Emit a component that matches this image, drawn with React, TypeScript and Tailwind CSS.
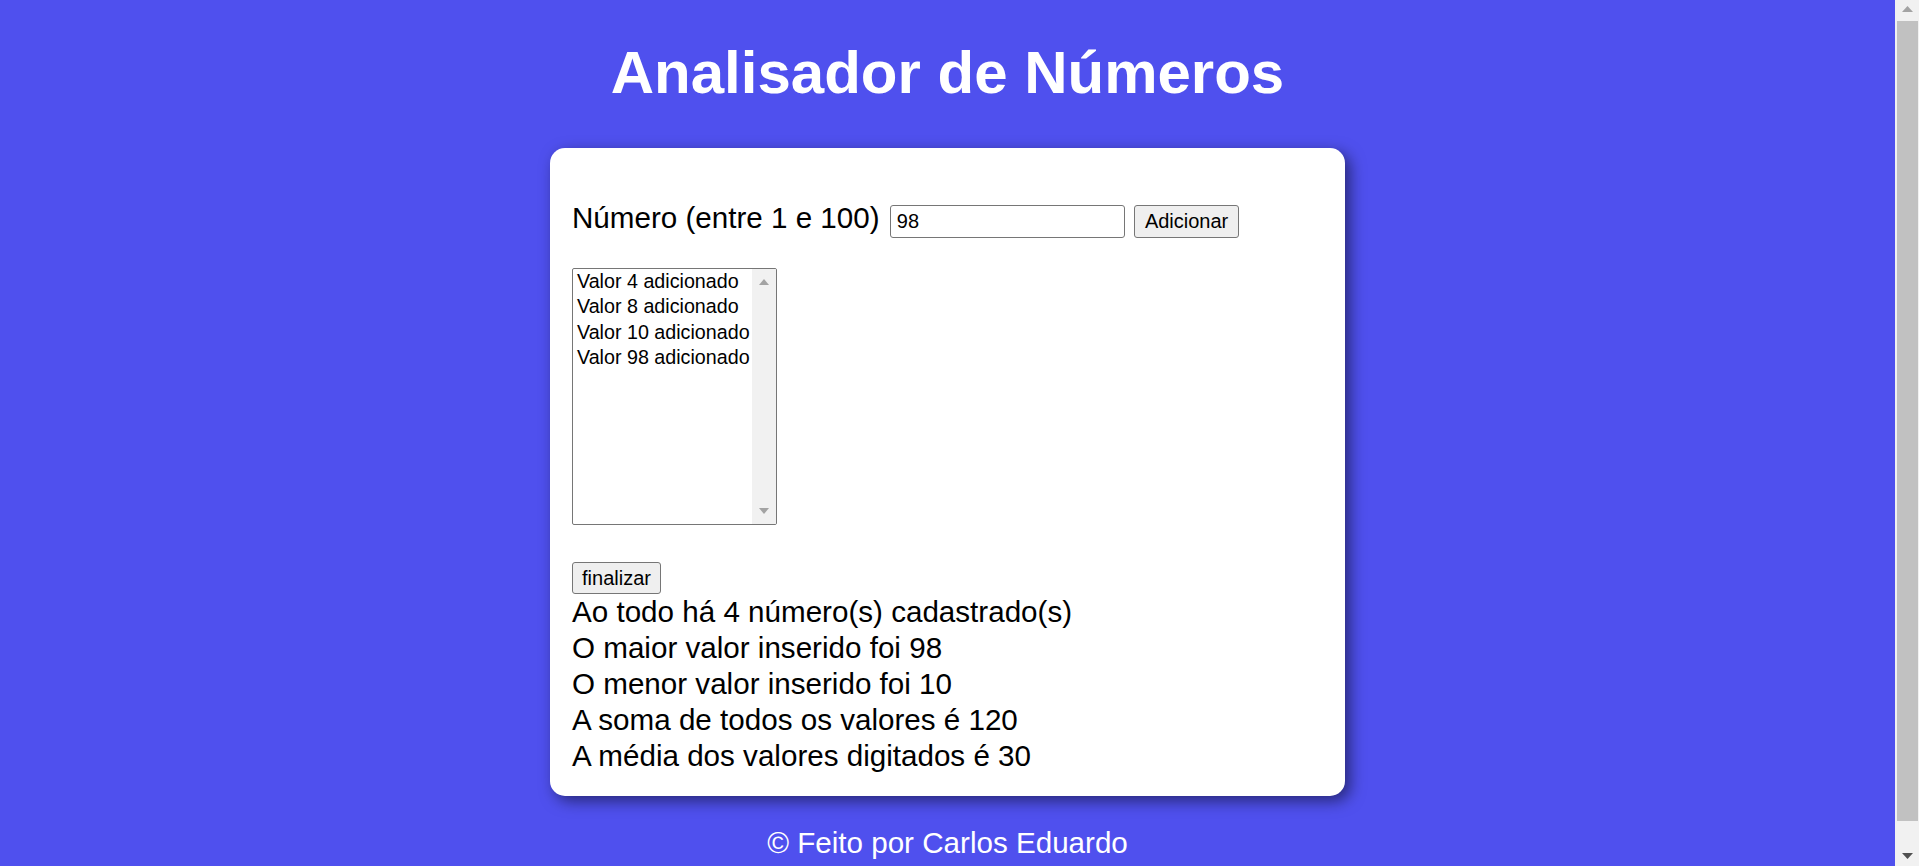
import React from 'react';

const valores = [4, 8, 10, 98];

// Caixa de lista desenhada a mao (imita o select multiple nativo)
const ListaValores = ({ itens }: { itens: number[] }) => (
    <div className="mt-[30px] flex h-[257px] w-[205px] overflow-hidden rounded-[2px] border border-[#767676] bg-white text-[19.7px] leading-[25.3px]">
        <div className="flex-1 pl-[4px]">
            {itens.map((v) => (
                <div key={v} className="whitespace-nowrap">Valor {v} adicionado</div>
            ))}
        </div>
        <div className="flex w-[24px] flex-col justify-between bg-[#f1f1f1]">
            <div className="flex h-[26px] items-center justify-center">
                <svg width="10" height="6" viewBox="0 0 10 6"><path d="M0 6 L5 0 L10 6 Z" fill="#a3a3a3" /></svg>
            </div>
            <div className="flex h-[26px] items-center justify-center">
                <svg width="10" height="6" viewBox="0 0 10 6"><path d="M0 0 L10 0 L5 6 Z" fill="#a3a3a3" /></svg>
            </div>
        </div>
    </div>
);

// Barra de rolagem da janela, como aparece na captura
const BarraRolagem = () => (
    <aside className="sticky top-0 flex h-screen w-[24px] shrink-0 flex-col self-start bg-[#f1f1f1]">
        <div className="flex h-[17px] items-center justify-center">
            <svg width="11" height="6" viewBox="0 0 11 6"><path d="M0 6 L5.5 0 L11 6 Z" fill="#a3a3a3" /></svg>
        </div>
        <div className="ml-[2px] mt-[4px] h-[800px] w-[21px] bg-[#c1c1c1]" />
        <div className="flex-1" />
        <div className="flex h-[21px] items-center justify-center">
            <svg width="11" height="6" viewBox="0 0 11 6"><path d="M0 0 L11 0 L5.5 6 Z" fill="#505050" /></svg>
        </div>
    </aside>
);

export default function App() {
    const total = valores.length;
    const maior = Math.max(...valores);
    const menor = 10; // mostrado assim na tela original
    const soma = valores.reduce((a, b) => a + b, 0);
    const media = 30;

    return (
        <div className="flex min-h-screen bg-[#4f50ee] font-['Liberation_Sans',Arial,sans-serif] text-[29.6px] text-black">
            <div className="flex flex-1 flex-col items-center pb-[30px]">
                <h1 className="mb-[41px] mt-[38px] text-[60px] font-bold leading-[69px] text-white">Analisador de Números</h1>

                <main className="w-[795px] rounded-[15px] bg-white pb-[22px] pl-[22px] pr-[20px] pt-[52px] leading-[36px] shadow-[5px_5px_15px_rgba(0,0,0,0.5)]">
                    <div>
                        <span>Número (entre 1 e 100)</span>{' '}
                        <input
                            type="number"
                            value="98"
                            readOnly
                            className="ml-[2px] h-[33px] w-[235px] rounded-[3px] border border-[#767676] bg-white px-[6px] align-baseline text-[20px] leading-[23px] [appearance:textfield]"
                        />{' '}
                        <button className="ml-[1px] h-[33px] w-[105px] rounded-[3px] border border-[#767676] bg-[#efefef] align-baseline text-[20px] leading-[23px]">Adicionar</button>
                    </div>

                    <ListaValores itens={valores} />

                    <button className="mt-[37px] block h-[32px] w-[89px] rounded-[3px] border border-[#767676] bg-[#efefef] text-[20px] leading-[23px]">finalizar</button>

                    <div>
                        <p>Ao todo há {total} número(s) cadastrado(s)</p>
                        <p>O maior valor inserido foi {maior}</p>
                        <p>O menor valor inserido foi {menor}</p>
                        <p>A soma de todos os valores é {soma}</p>
                        <p>A média dos valores digitados é {media}</p>
                    </div>
                </main>

                <footer className="mt-[30px] leading-[34.5px] text-white">© Feito por Carlos Eduardo</footer>
            </div>
            <BarraRolagem />
        </div>
    );
}
